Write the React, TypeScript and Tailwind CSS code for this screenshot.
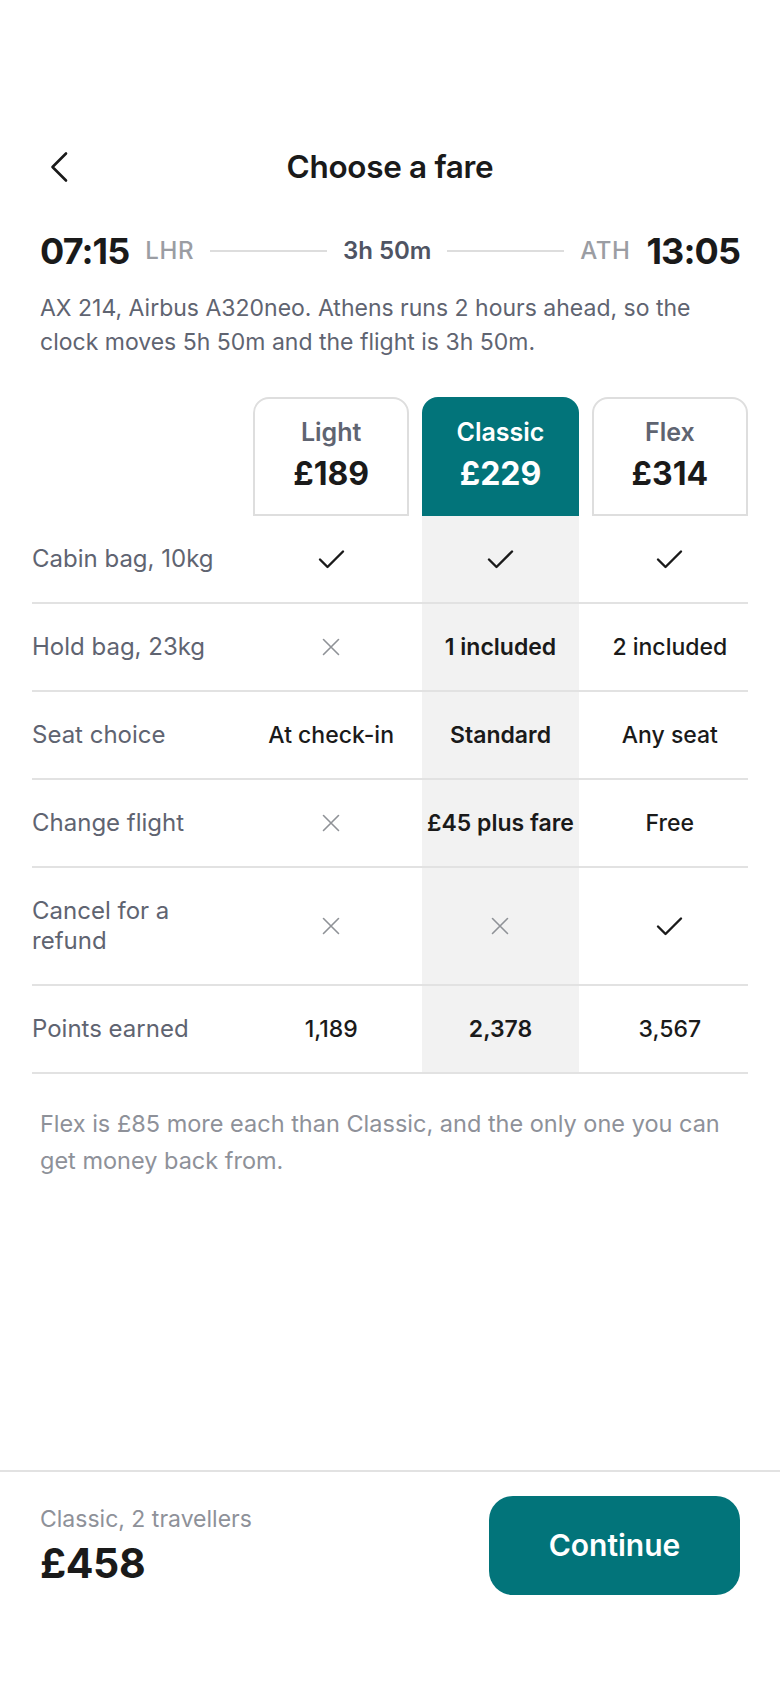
import React from "react";

type Cell = { kind: "check" } | { kind: "cross" } | { kind: "text"; value: string };

interface Row {
  label: string;
  cells: [Cell, Cell, Cell];
}

const check: Cell = { kind: "check" };
const cross: Cell = { kind: "cross" };
const t = (value: string): Cell => ({ kind: "text", value });

const rows: Row[] = [
  { label: "Cabin bag, 10kg", cells: [check, check, check] },
  { label: "Hold bag, 23kg", cells: [cross, t("1 included"), t("2 included")] },
  { label: "Seat choice", cells: [t("At check-in"), t("Standard"), t("Any seat")] },
  { label: "Change flight", cells: [cross, t("£45 plus fare"), t("Free")] },
  { label: "Cancel for a refund", cells: [cross, cross, check] },
  { label: "Points earned", cells: [t("1,189"), t("2,378"), t("3,567")] },
];

const fares = [
  { name: "Light", price: "£189" },
  { name: "Classic", price: "£229", selected: true },
  { name: "Flex", price: "£314" },
];

function CheckIcon() {
  return (
    <svg width="27" height="20" viewBox="0 0 27 20" fill="none">
      <path d="M2 10.5 9.5 18 25 2.5" stroke="#1a1a1a" strokeWidth="2.4" strokeLinecap="round" strokeLinejoin="round" />
    </svg>
  );
}

function CrossIcon() {
  return (
    <svg width="18" height="18" viewBox="0 0 18 18" fill="none">
      <path d="M1.5 1.5 16.5 16.5M16.5 1.5 1.5 16.5" stroke="#8f9297" strokeWidth="1.6" strokeLinecap="round" />
    </svg>
  );
}

function FareCell({ cell, selected }: { cell: Cell; selected: boolean }) {
  if (cell.kind === "check") return <CheckIcon />;
  if (cell.kind === "cross") return <CrossIcon />;
  return (
    <span className={`text-[23px] leading-[30px] text-[#1a1a1a] whitespace-nowrap ${selected ? "font-semibold" : "font-medium"}`}>
      {cell.value}
    </span>
  );
}

export default function App() {
  return (
    <div className="h-screen flex flex-col bg-white font-['Inter',sans-serif] text-[#1a1a1a]">
      <div className="flex-1 pt-[139px]">
        {/* header */}
        <div className="grid grid-cols-[1fr_auto_1fr] items-center h-14 px-10">
          <button className="ml-[9px] w-fit">
            <svg width="20" height="32" viewBox="0 0 20 32" fill="none">
              <path d="M17 2.5 3.5 16 17 29.5" stroke="#1a1a1a" strokeWidth="2.6" strokeLinecap="round" strokeLinejoin="round" />
            </svg>
          </button>
          <h1 className="text-[31.5px] font-semibold tracking-[-0.01em]">Choose a fare</h1>
          <div />
        </div>

        {/* times */}
        <div className="flex items-center gap-4 px-10 mt-[34px] h-11">
          <span className="text-[36px] font-bold tracking-tight">07:15</span>
          <span className="text-[24px] font-medium tracking-wide text-[#9b9da3]">LHR</span>
          <div className="flex-1 h-[2px] bg-[#dddddd]" />
          <span className="text-[24px] font-semibold text-[#4f5463]">3h 50m</span>
          <div className="flex-1 h-[2px] bg-[#dddddd]" />
          <span className="text-[24px] font-medium tracking-wide text-[#9b9da3]">ATH</span>
          <span className="text-[36px] font-bold tracking-tight">13:05</span>
        </div>

        <p className="px-10 mt-[18px] text-[23px] leading-[34px] text-[#5f6471]">
          AX 214, Airbus A320neo. Athens runs 2 hours ahead, so the clock moves 5h 50m and the flight is 3h 50m.
        </p>

        {/* fare table */}
        <div className="mx-8 mt-[38px]">
          <div className="grid grid-cols-[208px_1fr_1fr_1fr] gap-x-[13px]">
            <div />
            {fares.map((f) =>
              f.selected ? (
                <div key={f.name} className="h-[119px] rounded-t-[16px] bg-[#02747a] flex flex-col items-center pt-[19px]">
                  <span className="text-[25px] leading-[32px] font-semibold text-white">{f.name}</span>
                  <span className="mt-[6px] text-[32px] leading-[40px] font-bold text-white">{f.price}</span>
                </div>
              ) : (
                <div key={f.name} className="h-[119px] rounded-t-[16px] border-2 border-[#dedede] flex flex-col items-center pt-[17px]">
                  <span className="text-[25px] leading-[32px] font-semibold text-[#5f6471]">{f.name}</span>
                  <span className="mt-[6px] text-[32px] leading-[40px] font-bold">{f.price}</span>
                </div>
              )
            )}
          </div>

          {rows.map((row) => (
            <div key={row.label} className="grid grid-cols-[208px_1fr_1fr_1fr] gap-x-[13px] border-b-2 border-[#e2e2e2]">
              <div className="py-[28px] pr-6 text-[24px] leading-[30px] text-[#5f6471]">{row.label}</div>
              {row.cells.map((cell, i) => (
                <div
                  key={i}
                  className={`flex items-center justify-center ${i === 1 ? "bg-[#f2f2f2]" : ""}`}
                >
                  <FareCell cell={cell} selected={i === 1} />
                </div>
              ))}
            </div>
          ))}
        </div>

        <p className="px-10 mt-[31px] text-[23.5px] leading-[37px] text-[#8e9199]">
          Flex is £85 more each than Classic, and the only one you can get money back from.
        </p>
      </div>

      {/* bottom bar */}
      <div className="border-t-2 border-[#e2e2e2] px-10 pt-6 pb-[93px] flex items-center justify-between">
        <div className="flex flex-col">
          <span className="text-[23px] leading-[28px] text-[#8e9199]">Classic, 2 travellers</span>
          <span className="text-[41px] leading-[46px] font-bold mt-[7px] tracking-[-0.01em]">£458</span>
        </div>
        <button className="w-[251px] h-[99px] rounded-[24px] bg-[#02747a] text-white text-[30px] font-semibold">
          Continue
        </button>
      </div>
    </div>
  );
}
